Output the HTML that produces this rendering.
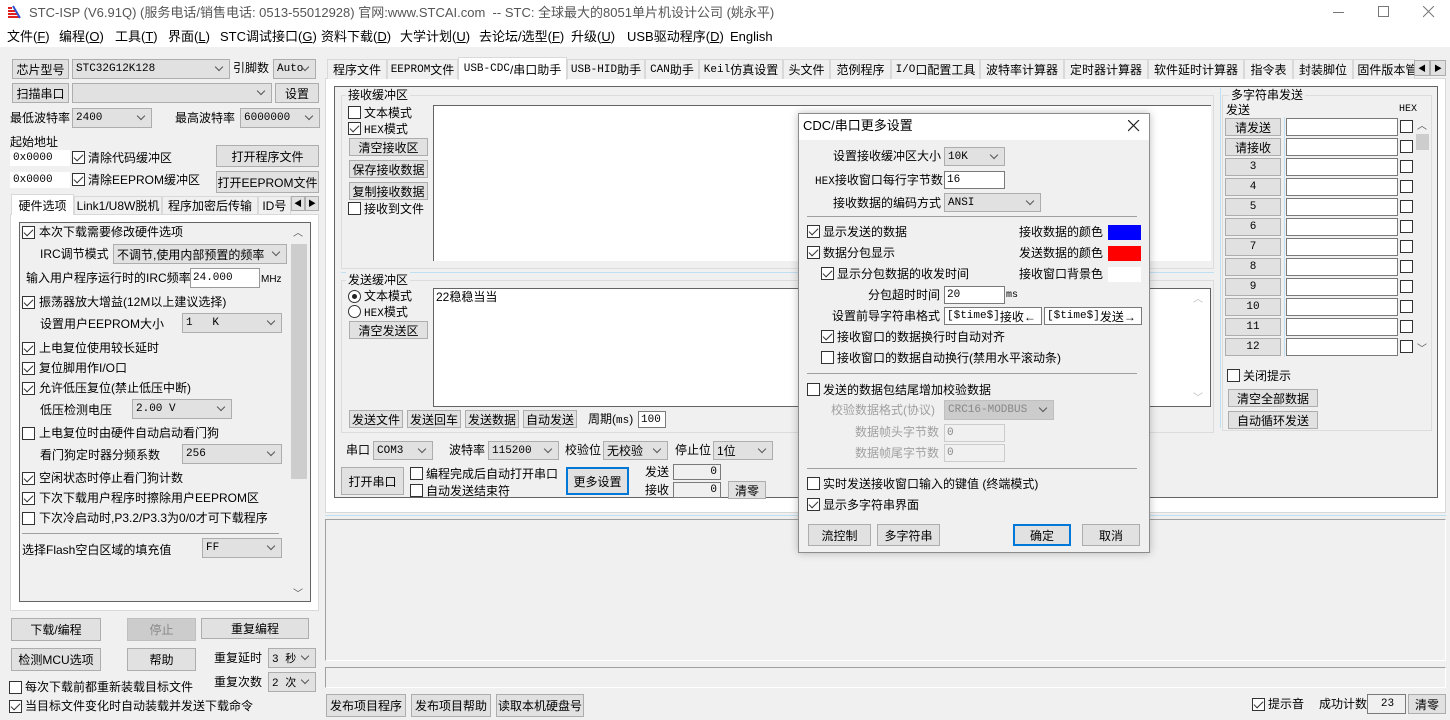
<!DOCTYPE html>
<html><head><meta charset="utf-8">
<style>
*{box-sizing:border-box;margin:0;padding:0}
body{width:1450px;height:720px;overflow:hidden;background:#f0f0f0;position:relative;font-family:"Liberation Sans","Noto Sans CJK SC",sans-serif;font-size:12px;color:#000}
.a{position:absolute;white-space:nowrap}
.t{position:absolute;white-space:nowrap;line-height:16px;height:16px}
.b{position:absolute;background:#e1e1e1;border:1px solid #adadad;display:flex;align-items:center;justify-content:center;white-space:nowrap}
.i{position:absolute;background:#fff;border:1px solid #7a7a7a;padding-left:2px;display:flex;align-items:center;white-space:nowrap;font-family:"Liberation Mono","Noto Sans CJK SC",monospace;font-size:11px}
.s{position:absolute;background:#e1e1e1;border:1px solid #adadad;padding-left:3px;display:flex;align-items:center;white-space:nowrap;font-family:"Liberation Mono","Noto Sans CJK SC",monospace;font-size:11px}
.s::after{content:"";position:absolute;right:7px;top:50%;margin-top:-5px;width:5px;height:5px;border-right:1px solid #555;border-bottom:1px solid #555;transform:rotate(45deg)}
.c{position:absolute;width:13px;height:13px;border:1px solid #333;background:#fff}
.k::after{content:"";position:absolute;left:3px;top:0px;width:4px;height:8px;border-right:1.5px solid #333;border-bottom:1.5px solid #333;transform:rotate(45deg)}
.r{position:absolute;width:13px;height:13px;border:1px solid #333;border-radius:50%;background:#fff}
.g{position:absolute;border:1px solid #dcdcdc}
.m{font-family:"Liberation Mono","Noto Sans CJK SC",monospace;font-size:11px}
.tab{position:absolute;top:59px;height:20px;border:1px solid #d9d9d9;border-bottom:none;background:#f0f0f0;display:flex;align-items:center;justify-content:center;white-space:nowrap}
.w{position:absolute;background:#fff}
</style></head><body>
<div class="w" style="left:0;top:0;width:1450px;height:47px"></div>
<svg class="a" style="left:7px;top:5px" width="14" height="14"><path d="M1 3h4M1 6h7M1 9h10M1 12h12" stroke="#e02020" stroke-width="2"/><path d="M6 1l7 12" stroke="#3050d0" stroke-width="2"/></svg>
<div class="t" style="left:29px;top:5px;font-size:13px;color:#555">STC-ISP (V6.91Q) (服务电话/销售电话: 0513-55012928) 官网:www.STCAI.com &nbsp;-- STC: 全球最大的8051单片机设计公司 (姚永平)</div>
<div class="a" style="left:1333px;top:12px;width:11px;height:1px;background:#777"></div>
<div class="a" style="left:1378px;top:6px;width:11px;height:11px;border:1px solid #777"></div>
<svg class="a" style="left:1423px;top:6px" width="12" height="12"><path d="M0 0L11 11M11 0L0 11" stroke="#777"/></svg>
<div class="t" style="left:7px;top:29px;font-size:13px">文件(<u>F</u>)</div>
<div class="t" style="left:59px;top:29px;font-size:13px">编程(<u>O</u>)</div>
<div class="t" style="left:115px;top:29px;font-size:13px">工具(<u>T</u>)</div>
<div class="t" style="left:168px;top:29px;font-size:13px">界面(<u>L</u>)</div>
<div class="t" style="left:220px;top:29px;font-size:13px">STC调试接口(<u>G</u>)</div>
<div class="t" style="left:321px;top:29px;font-size:13px">资料下载(<u>D</u>)</div>
<div class="t" style="left:400px;top:29px;font-size:13px">大学计划(<u>U</u>)</div>
<div class="t" style="left:479px;top:29px;font-size:13px">去论坛/选型(<u>F</u>)</div>
<div class="t" style="left:571px;top:29px;font-size:13px">升级(<u>U</u>)</div>
<div class="t" style="left:627px;top:29px;font-size:13px">USB驱动程序(<u>D</u>)</div>
<div class="t" style="left:730px;top:29px;font-size:13px">English</div>

<div class="b" style="left:12px;top:59px;width:57px;height:20px">芯片型号</div>
<div class="s" style="left:72px;top:59px;width:158px;height:20px">STC32G12K128</div>
<div class="t" style="left:233px;top:60px">引脚数</div>
<div class="s" style="left:273px;top:59px;width:43px;height:20px">Auto</div>
<div class="b" style="left:12px;top:83px;width:57px;height:20px">扫描串口</div>
<div class="s" style="left:72px;top:83px;width:200px;height:20px"></div>
<div class="b" style="left:275px;top:83px;width:44px;height:20px">设置</div>
<div class="t" style="left:10px;top:110px">最低波特率</div>
<div class="s" style="left:72px;top:108px;width:80px;height:20px">2400</div>
<div class="t" style="left:175px;top:110px">最高波特率</div>
<div class="s" style="left:240px;top:108px;width:80px;height:20px">6000000</div>
<div class="t" style="left:10px;top:134px">起始地址</div>
<div class="i" style="left:10px;top:150px;width:60px;height:16px;border-color:#fff">0x0000</div>
<div class="c k" style="left:72px;top:151px"></div><div class="t" style="left:88px;top:150px">清除代码缓冲区</div>
<div class="b" style="left:216px;top:145px;width:103px;height:22px">打开程序文件</div>
<div class="i" style="left:10px;top:172px;width:60px;height:16px;border-color:#fff">0x0000</div>
<div class="c k" style="left:72px;top:173px"></div><div class="t" style="left:88px;top:172px">清除EEPROM缓冲区</div>
<div class="b" style="left:216px;top:171px;width:103px;height:22px">打开EEPROM文件</div>
<div class="a" style="left:10px;top:214px;width:309px;height:397px;border:1px solid #d9d9d9;background:#fff"></div>
<div class="tab" style="left:11px;top:194px;width:63px;height:21px;background:#fff">硬件选项</div>
<div class="tab" style="left:74px;top:196px;width:88px;height:18px">Link1/U8W脱机</div>
<div class="tab" style="left:162px;top:196px;width:96px;height:18px">程序加密后传输</div>
<div class="tab" style="left:258px;top:196px;width:33px;height:18px;justify-content:flex-start;overflow:hidden">&nbsp;ID号</div>
<div class="b" style="left:291px;top:196px;width:14px;height:15px;font-size:8px">◀</div>
<div class="b" style="left:305px;top:196px;width:14px;height:15px;font-size:8px">▶</div>
<div class="a" style="left:19px;top:222px;width:292px;height:380px;border:1px solid #646464;background:#f0f0f0"></div>
<div class="a" style="left:290px;top:223px;width:18px;height:378px;background:#f0f0f0"></div>
<div class="a" style="left:291px;top:244px;width:16px;height:235px;background:#cdcdcd"></div>
<div class="t" style="left:293px;top:226px;font-size:10px;color:#555">︿</div>
<div class="t" style="left:293px;top:587px;font-size:10px;color:#555">﹀</div>
<div class="c k" style="left:22px;top:226px"></div><div class="t" style="left:39px;top:224px">本次下载需要修改硬件选项</div>
<div class="t" style="left:40px;top:246px">IRC调节模式</div>
<div class="s" style="left:113px;top:244px;width:174px;height:20px;font-family:'Liberation Sans','Noto Sans CJK SC',sans-serif;font-size:12px">不调节,使用内部预置的频率</div>
<div class="t" style="left:26px;top:270px">输入用户程序运行时的IRC频率</div>
<div class="i" style="left:190px;top:268px;width:70px;height:20px;border-color:#999">24.000</div>
<div class="t" style="left:261px;top:272px;font-size:10px">MHz</div>
<div class="c k" style="left:22px;top:296px"></div><div class="t" style="left:39px;top:294px">振荡器放大增益(12M以上建议选择)</div>
<div class="t" style="left:40px;top:316px">设置用户EEPROM大小</div>
<div class="s" style="left:182px;top:313px;width:100px;height:20px">1 &nbsp;&nbsp;K</div>
<div class="c k" style="left:22px;top:342px"></div><div class="t" style="left:39px;top:340px">上电复位使用较长延时</div>
<div class="c k" style="left:22px;top:362px"></div><div class="t" style="left:39px;top:360px">复位脚用作I/O口</div>
<div class="c k" style="left:22px;top:382px"></div><div class="t" style="left:39px;top:380px">允许低压复位(禁止低压中断)</div>
<div class="t" style="left:40px;top:402px">低压检测电压</div>
<div class="s" style="left:132px;top:399px;width:100px;height:20px">2.00 V</div>
<div class="c" style="left:22px;top:427px"></div><div class="t" style="left:39px;top:425px">上电复位时由硬件自动启动看门狗</div>
<div class="t" style="left:40px;top:447px">看门狗定时器分频系数</div>
<div class="s" style="left:182px;top:444px;width:100px;height:20px">256</div>
<div class="c k" style="left:22px;top:472px"></div><div class="t" style="left:39px;top:470px">空闲状态时停止看门狗计数</div>
<div class="c k" style="left:22px;top:492px"></div><div class="t" style="left:39px;top:490px">下次下载用户程序时擦除用户EEPROM区</div>
<div class="c" style="left:22px;top:512px"></div><div class="t" style="left:39px;top:510px">下次冷启动时,P3.2/P3.3为0/0才可下载程序</div>
<div class="a" style="left:22px;top:533px;width:257px;height:1px;background:#a0a0a0"></div>
<div class="t" style="left:22px;top:542px">选择Flash空白区域的填充值</div>
<div class="s" style="left:202px;top:538px;width:80px;height:20px">FF</div>
<div class="b" style="left:11px;top:618px;width:90px;height:23px">下载/编程</div>
<div class="b" style="left:127px;top:618px;width:69px;height:23px;background:#cccccc;border-color:#bfbfbf;color:#888">停止</div>
<div class="b" style="left:201px;top:618px;width:108px;height:21px">重复编程</div>
<div class="b" style="left:11px;top:648px;width:90px;height:23px">检测MCU选项</div>
<div class="b" style="left:127px;top:648px;width:69px;height:23px">帮助</div>
<div class="t" style="left:214px;top:650px">重复延时</div>
<div class="s" style="left:268px;top:648px;width:48px;height:20px">3 秒</div>
<div class="c" style="left:9px;top:681px"></div><div class="t" style="left:25px;top:679px">每次下载前都重新装载目标文件</div>
<div class="t" style="left:214px;top:674px">重复次数</div>
<div class="s" style="left:268px;top:672px;width:48px;height:20px">2 次</div>
<div class="c k" style="left:9px;top:700px"></div><div class="t" style="left:25px;top:698px">当目标文件变化时自动装载并发送下载命令</div>

<div class="a" style="left:325px;top:78px;width:1121px;height:435px;border:1px solid #d9d9d9;background:#fff"></div>
<div class="a" style="left:334px;top:86px;width:1104px;height:412px;border:1px solid #646464;background:#f0f0f0"></div>
<div class="tab" style="left:327px;width:60px">程序文件</div>
<div class="tab" style="left:387px;width:71px"><span class="m">EEPROM</span>文件</div>
<div class="tab" style="left:458px;top:57px;height:23px;width:109px;background:#fff"><span class="m">USB-CDC</span>/串口助手</div>
<div class="tab" style="left:567px;width:78px"><span class="m">USB-HID</span>助手</div>
<div class="tab" style="left:645px;width:54px"><span class="m">CAN</span>助手</div>
<div class="tab" style="left:699px;width:84px"><span class="m">Keil</span>仿真设置</div>
<div class="tab" style="left:783px;width:47px">头文件</div>
<div class="tab" style="left:830px;width:61px">范例程序</div>
<div class="tab" style="left:891px;width:89px"><span class="m">I/O</span>口配置工具</div>
<div class="tab" style="left:980px;width:84px">波特率计算器</div>
<div class="tab" style="left:1064px;width:84px">定时器计算器</div>
<div class="tab" style="left:1148px;width:96px">软件延时计算器</div>
<div class="tab" style="left:1244px;width:49px">指令表</div>
<div class="tab" style="left:1293px;width:60px">封装脚位</div>
<div class="tab" style="left:1353px;width:62px;overflow:hidden;justify-content:flex-start">&nbsp;固件版本管</div>
<div class="b" style="left:1414px;top:60px;width:16px;height:16px;font-size:8px">◀</div>
<div class="b" style="left:1430px;top:60px;width:16px;height:16px;font-size:8px">▶</div>

<div class="g" style="left:341px;top:95px;width:873px;height:174px"></div>
<div class="t" style="left:346px;top:87px;background:#f0f0f0;padding:0 2px">接收缓冲区</div>
<div class="c" style="left:348px;top:106px"></div><div class="t" style="left:364px;top:105px">文本模式</div>
<div class="c k" style="left:348px;top:122px"></div><div class="t" style="left:364px;top:121px"><span class="m">HEX</span>模式</div>
<div class="b" style="left:349px;top:138px;width:79px;height:18px">清空接收区</div>
<div class="b" style="left:349px;top:160px;width:79px;height:18px">保存接收数据</div>
<div class="b" style="left:349px;top:182px;width:79px;height:18px">复制接收数据</div>
<div class="c" style="left:348px;top:202px"></div><div class="t" style="left:364px;top:201px">接收到文件</div>
<div class="w" style="left:433px;top:105px;width:778px;height:156px;border-left:1px solid #646464;border-top:1px solid #646464"></div>
<div class="a" style="left:341px;top:272px;width:873px;height:1px;background:#bfe0f2"></div>
<div class="g" style="left:341px;top:280px;width:873px;height:153px"></div>
<div class="t" style="left:346px;top:272px;background:#f0f0f0;padding:0 2px">发送缓冲区</div>
<div class="r" style="left:348px;top:290px"></div><div class="a" style="left:352px;top:294px;width:5px;height:5px;border-radius:50%;background:#222"></div>
<div class="t" style="left:364px;top:288px">文本模式</div>
<div class="r" style="left:348px;top:305px"></div><div class="t" style="left:364px;top:304px"><span class="m">HEX</span>模式</div>
<div class="b" style="left:349px;top:321px;width:79px;height:18px">清空发送区</div>
<div class="w" style="left:433px;top:288px;width:778px;height:119px;border:1px solid #646464"></div>
<div class="t" style="left:436px;top:289px">22稳稳当当</div>
<div class="t" style="left:1193px;top:292px;font-size:10px;color:#bbb">︿</div>
<div class="t" style="left:1193px;top:391px;font-size:10px;color:#bbb">﹀</div>
<div class="b" style="left:349px;top:410px;width:54px;height:18px">发送文件</div>
<div class="b" style="left:407px;top:410px;width:54px;height:18px">发送回车</div>
<div class="b" style="left:465px;top:410px;width:54px;height:18px">发送数据</div>
<div class="b" style="left:523px;top:410px;width:54px;height:18px">自动发送</div>
<div class="t" style="left:588px;top:411px">周期(<span class="m">ms</span>)</div>
<div class="i" style="left:638px;top:411px;width:28px;height:17px">100</div>
<div class="t" style="left:346px;top:442px">串口</div>
<div class="s" style="left:373px;top:441px;width:60px;height:19px">COM3</div>
<div class="t" style="left:449px;top:442px">波特率</div>
<div class="s" style="left:488px;top:441px;width:71px;height:19px">115200</div>
<div class="t" style="left:565px;top:442px">校验位</div>
<div class="s" style="left:603px;top:441px;width:65px;height:19px;font-family:'Liberation Sans','Noto Sans CJK SC',sans-serif;font-size:12px">无校验</div>
<div class="t" style="left:675px;top:442px">停止位</div>
<div class="s" style="left:713px;top:441px;width:60px;height:19px;font-family:'Liberation Sans','Noto Sans CJK SC',sans-serif;font-size:12px">1位</div>
<div class="b" style="left:341px;top:467px;width:63px;height:28px">打开串口</div>
<div class="c" style="left:410px;top:467px"></div><div class="t" style="left:426px;top:466px">编程完成后自动打开串口</div>
<div class="c" style="left:410px;top:484px"></div><div class="t" style="left:426px;top:483px">自动发送结束符</div>
<div class="b" style="left:566px;top:467px;width:63px;height:28px;border:2px solid #0078d7">更多设置</div>
<div class="t" style="left:645px;top:464px">发送</div>
<div class="i" style="left:673px;top:464px;width:48px;height:16px;justify-content:flex-end;padding-right:3px;background:#f0f0f0">0</div>
<div class="t" style="left:645px;top:482px">接收</div>
<div class="i" style="left:673px;top:482px;width:48px;height:16px;justify-content:flex-end;padding-right:3px;background:#f0f0f0">0</div>
<div class="b" style="left:728px;top:481px;width:38px;height:18px">清零</div>

<div class="g" style="left:1222px;top:95px;width:210px;height:336px"></div>
<div class="a" style="left:1220px;top:88px;width:1px;height:340px;background:#bfe0f2"></div>
<div class="t" style="left:1229px;top:87px;background:#f0f0f0;padding:0 2px">多字符串发送</div>
<div class="t" style="left:1226px;top:102px">发送</div>
<div class="t m" style="left:1399px;top:102px;font-size:10px">HEX</div>
<div class="a" style="left:1284px;top:117px;width:1px;height:240px;background:#bfe0f2"></div>
<div class="b" style="left:1225px;top:118px;width:56px;height:18px">请发送</div>
<div class="b" style="left:1225px;top:138px;width:56px;height:18px">请接收</div>
<div class="b m" style="left:1225px;top:158px;width:56px;height:18px">3</div>
<div class="b m" style="left:1225px;top:178px;width:56px;height:18px">4</div>
<div class="b m" style="left:1225px;top:198px;width:56px;height:18px">5</div>
<div class="b m" style="left:1225px;top:218px;width:56px;height:18px">6</div>
<div class="b m" style="left:1225px;top:238px;width:56px;height:18px">7</div>
<div class="b m" style="left:1225px;top:258px;width:56px;height:18px">8</div>
<div class="b m" style="left:1225px;top:278px;width:56px;height:18px">9</div>
<div class="b m" style="left:1225px;top:298px;width:56px;height:18px">10</div>
<div class="b m" style="left:1225px;top:318px;width:56px;height:18px">11</div>
<div class="b m" style="left:1225px;top:338px;width:56px;height:18px">12</div>
<div class="i" style="left:1286px;top:118px;width:112px;height:18px"></div>
<div class="i" style="left:1286px;top:138px;width:112px;height:18px"></div>
<div class="i" style="left:1286px;top:158px;width:112px;height:18px"></div>
<div class="i" style="left:1286px;top:178px;width:112px;height:18px"></div>
<div class="i" style="left:1286px;top:198px;width:112px;height:18px"></div>
<div class="i" style="left:1286px;top:218px;width:112px;height:18px"></div>
<div class="i" style="left:1286px;top:238px;width:112px;height:18px"></div>
<div class="i" style="left:1286px;top:258px;width:112px;height:18px"></div>
<div class="i" style="left:1286px;top:278px;width:112px;height:18px"></div>
<div class="i" style="left:1286px;top:298px;width:112px;height:18px"></div>
<div class="i" style="left:1286px;top:318px;width:112px;height:18px"></div>
<div class="i" style="left:1286px;top:338px;width:112px;height:18px"></div>
<div class="c" style="left:1400px;top:120px"></div><div class="c" style="left:1400px;top:140px"></div>
<div class="c" style="left:1400px;top:160px"></div><div class="c" style="left:1400px;top:180px"></div>
<div class="c" style="left:1400px;top:200px"></div><div class="c" style="left:1400px;top:220px"></div>
<div class="c" style="left:1400px;top:240px"></div><div class="c" style="left:1400px;top:260px"></div>
<div class="c" style="left:1400px;top:280px"></div><div class="c" style="left:1400px;top:300px"></div>
<div class="c" style="left:1400px;top:320px"></div><div class="c" style="left:1400px;top:340px"></div>
<div class="t" style="left:1417px;top:119px;font-size:10px;color:#555">︿</div>
<div class="a" style="left:1416px;top:134px;width:13px;height:16px;background:#cdcdcd"></div>
<div class="t" style="left:1417px;top:342px;font-size:10px;color:#555">﹀</div>
<div class="c" style="left:1227px;top:369px"></div><div class="t" style="left:1243px;top:368px">关闭提示</div>
<div class="b" style="left:1228px;top:389px;width:90px;height:18px">清空全部数据</div>
<div class="b" style="left:1228px;top:411px;width:90px;height:18px">自动循环发送</div>

<div class="a" style="left:325px;top:515px;width:1121px;height:1px;background:#bfe0f2"></div>
<div class="a" style="left:325px;top:519px;width:1121px;height:142px;border:1px solid #a0a0a0;border-right-color:#fff;border-bottom-color:#fff;background:#f0f0f0"></div>
<div class="a" style="left:325px;top:667px;width:1121px;height:21px;border:1px solid #a0a0a0;border-right-color:#fff;border-bottom-color:#fff"></div>
<div class="b" style="left:326px;top:694px;width:80px;height:23px">发布项目程序</div>
<div class="b" style="left:411px;top:694px;width:80px;height:23px">发布项目帮助</div>
<div class="b" style="left:496px;top:694px;width:88px;height:23px">读取本机硬盘号</div>
<div class="c k" style="left:1252px;top:698px"></div><div class="t" style="left:1268px;top:696px">提示音</div>
<div class="t" style="left:1319px;top:696px">成功计数</div>
<div class="i" style="left:1367px;top:694px;width:39px;height:20px;justify-content:center;background:#f0f0f0">23</div>
<div class="b" style="left:1408px;top:694px;width:38px;height:20px">清零</div>

<div class="a" style="left:798px;top:113px;width:352px;height:440px;border:1px solid #8c8c8c;background:#f0f0f0;box-shadow:0 0 8px rgba(0,0,0,.25)"></div>
<div class="w" style="left:799px;top:114px;width:350px;height:26px"></div>
<div class="t" style="left:803px;top:118px;font-size:13px">CDC/串口更多设置</div>
<svg class="a" style="left:1128px;top:120px" width="12" height="12"><path d="M0 0L11 11M11 0L0 11" stroke="#222" stroke-width="1.2"/></svg>
<div class="t" style="left:833px;top:148px">设置接收缓冲区大小</div>
<div class="s" style="left:944px;top:147px;width:61px;height:19px">10K</div>
<div class="t" style="left:815px;top:172px"><span class="m">HEX</span>接收窗口每行字节数</div>
<div class="i" style="left:944px;top:171px;width:61px;height:18px">16</div>
<div class="t" style="left:833px;top:195px">接收数据的编码方式</div>
<div class="s" style="left:944px;top:193px;width:97px;height:19px">ANSI</div>
<div class="a" style="left:807px;top:216px;width:330px;height:1px;background:#a0a0a0"></div>
<div class="c k" style="left:807px;top:225px"></div><div class="t" style="left:823px;top:224px">显示发送的数据</div>
<div class="t" style="left:1019px;top:224px">接收数据的颜色</div>
<div class="a" style="left:1108px;top:225px;width:33px;height:15px;background:#0000ff"></div>
<div class="c k" style="left:807px;top:246px"></div><div class="t" style="left:823px;top:245px">数据分包显示</div>
<div class="t" style="left:1019px;top:245px">发送数据的颜色</div>
<div class="a" style="left:1108px;top:246px;width:33px;height:15px;background:#ff0000"></div>
<div class="c k" style="left:821px;top:267px"></div><div class="t" style="left:837px;top:266px">显示分包数据的收发时间</div>
<div class="t" style="left:1019px;top:266px">接收窗口背景色</div>
<div class="a" style="left:1108px;top:267px;width:33px;height:15px;background:#fff"></div>
<div class="t" style="left:868px;top:287px">分包超时时间</div>
<div class="i" style="left:944px;top:286px;width:61px;height:18px">20</div>
<div class="t m" style="left:1006px;top:288px;font-size:10px">ms</div>
<div class="t" style="left:832px;top:308px">设置前导字符串格式</div>
<div class="i" style="left:944px;top:307px;width:98px;height:18px">[$time$]<span style="font-family:'Liberation Sans','Noto Sans CJK SC',sans-serif;font-size:12px">接收←</span></div>
<div class="i" style="left:1044px;top:307px;width:98px;height:18px">[$time$]<span style="font-family:'Liberation Sans','Noto Sans CJK SC',sans-serif;font-size:12px">发送→</span></div>
<div class="c k" style="left:821px;top:330px"></div><div class="t" style="left:837px;top:329px">接收窗口的数据换行时自动对齐</div>
<div class="c" style="left:821px;top:351px"></div><div class="t" style="left:837px;top:350px">接收窗口的数据自动换行(禁用水平滚动条)</div>
<div class="a" style="left:807px;top:373px;width:330px;height:1px;background:#a0a0a0"></div>
<div class="c" style="left:807px;top:383px"></div><div class="t" style="left:823px;top:382px">发送的数据包结尾增加校验数据</div>
<div class="t" style="left:831px;top:402px;color:#a0a0a0">校验数据格式(协议)</div>
<div class="s" style="left:944px;top:400px;width:110px;height:20px;background:#cccccc;border-color:#bfbfbf;color:#888">CRC16-MODBUS</div>
<div class="t" style="left:855px;top:424px;color:#a0a0a0">数据帧头字节数</div>
<div class="i" style="left:944px;top:424px;width:61px;height:18px;background:#f0f0f0;border-color:#ccc;color:#888">0</div>
<div class="t" style="left:855px;top:445px;color:#a0a0a0">数据帧尾字节数</div>
<div class="i" style="left:944px;top:444px;width:61px;height:18px;background:#f0f0f0;border-color:#ccc;color:#888">0</div>
<div class="a" style="left:807px;top:468px;width:330px;height:1px;background:#a0a0a0"></div>
<div class="c" style="left:807px;top:477px"></div><div class="t" style="left:823px;top:476px">实时发送接收窗口输入的键值 (终端模式)</div>
<div class="c k" style="left:807px;top:498px"></div><div class="t" style="left:823px;top:497px">显示多字符串界面</div>
<div class="b" style="left:808px;top:524px;width:63px;height:22px">流控制</div>
<div class="b" style="left:877px;top:524px;width:63px;height:22px">多字符串</div>
<div class="b" style="left:1013px;top:524px;width:58px;height:22px;border:2px solid #0078d7">确定</div>
<div class="b" style="left:1082px;top:524px;width:58px;height:22px">取消</div>
</body></html>
